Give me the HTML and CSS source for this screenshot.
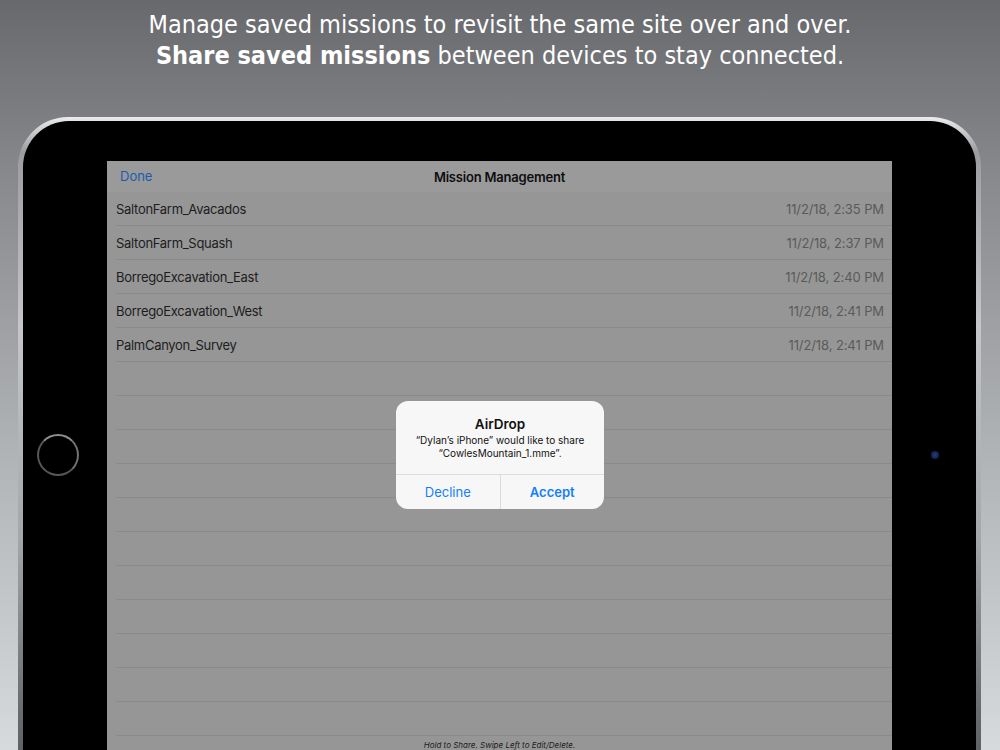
FILE: index.html
```html
<!DOCTYPE html>
<html>
<head>
<meta charset="utf-8">
<link rel="stylesheet" href="styles.css">
</head>
<body>
<div class="caption">
  <div>Manage saved missions to revisit the same site over and over.</div>
  <div><b>Share saved missions</b> between devices to stay connected.</div>
</div>
<div class="ipad">
  <div class="bezel">
    <div class="side left"><div class="home"></div></div>
    <div class="screen">
      <div class="nav">
        <span class="done">Done</span>
        <span class="title">Mission Management</span>
      </div>
      <div class="list">
        <div class="row"><span>SaltonFarm_Avacados</span><span class="date">11/2/18, 2:35 PM</span></div>
        <div class="row"><span>SaltonFarm_Squash</span><span class="date">11/2/18, 2:37 PM</span></div>
        <div class="row"><span>BorregoExcavation_East</span><span class="date">11/2/18, 2:40 PM</span></div>
        <div class="row"><span>BorregoExcavation_West</span><span class="date">11/2/18, 2:41 PM</span></div>
        <div class="row"><span>PalmCanyon_Survey</span><span class="date">11/2/18, 2:41 PM</span></div>
        <div class="row"></div><div class="row"></div><div class="row"></div><div class="row"></div>
        <div class="row"></div><div class="row"></div><div class="row"></div><div class="row"></div>
        <div class="row"></div><div class="row"></div><div class="row"></div>
      </div>
      <div class="hint">Hold to Share. Swipe Left to Edit/Delete.</div>
      <div class="alert">
        <div class="alert-body">
          <div class="alert-title">AirDrop</div>
          <div class="alert-msg">“Dylan’s iPhone” would like to share<br>“CowlesMountain_1.mme”.</div>
        </div>
        <div class="alert-actions">
          <div class="btn">Decline</div>
          <div class="btn strong">Accept</div>
        </div>
      </div>
    </div>
    <div class="side right"><div class="camera"></div></div>
  </div>
</div>
</body>
</html>
```
FILE: styles.css
```css
html, body {
  margin: 0;
  padding: 0;
}
body {
  width: 1000px;
  height: 750px;
  overflow: hidden;
  background: linear-gradient(to bottom, #68696d 0%, #8a8b8f 25%, #b0b3b6 60%, #d6dadd 100%);
  font-family: Inter, "Liberation Sans", sans-serif;
}
.caption {
  color: #fff;
  text-align: center;
  font-family: "DejaVu Sans Condensed", "DejaVu Sans", sans-serif;
  font-size: 25px;
  line-height: 31px;
  padding-top: 9px;
  height: 107px;
  box-sizing: border-box;
}
.caption b { font-weight: bold; }
.ipad {
  margin: 10px 19px 0 18px;
  height: 700px;
  padding: 4px 5px 0 5px;
  border-radius: 50px 50px 0 0;
  background: linear-gradient(to bottom, #ececee 0%, #9c9da1 5%, #c4c6c8 30%, #a4a6a9 60%, #6a6b6f 85%, #505155 100%);
  box-sizing: border-box;
}
.bezel {
  background: #000;
  height: 100%;
  border-radius: 46px 46px 0 0;
  display: flex;
  padding-top: 40px;
  box-sizing: border-box;
}
.side {
  width: 84px;
  flex: none;
  display: flex;
  justify-content: center;
}
.side.right { width: 83px; }
.home {
  margin-top: 273px;
  width: 38px;
  height: 38px;
  border-radius: 50%;
  border: 2px solid #55565a;
  border-top-color: #8e8f93;
  border-right-color: #707175;
  margin-left: -14px;
}
.camera {
  margin-top: 290px;
  width: 8px;
  height: 8px;
  border-radius: 50%;
  background: radial-gradient(circle, #1e3f90 0%, #17234a 60%, #2a2b30 100%);
  margin-left: 2px;
}
.screen {
  width: 785px;
  flex: none;
  background: #969696;
  position: relative;
  display: flex;
  flex-direction: column;
}
.nav {
  height: 31px;
  background: #9a9a9a;
  position: relative;
  display: flex;
  align-items: center;
  justify-content: center;
  font-size: 13px;
}
.done {
  position: absolute;
  left: 13px;
  top: 7px;
  color: #1b5cae;
  font-size: 13px;
}
.title {
  font-weight: 600;
  color: #0e0e0e;
  letter-spacing: -0.2px;
}
.list {
  padding-left: 9px;
}
.row {
  height: 34px;
  box-sizing: border-box;
  border-bottom: 1px solid #8a8a8a;
  display: flex;
  align-items: center;
  justify-content: space-between;
  padding-right: 8px;
  padding-top: 1px;
  font-size: 13px;
  letter-spacing: -0.3px;
  color: #1d1d1d;
}
.date { color: #5a5a5a; letter-spacing: -0.1px; }
.hint {
  text-align: center;
  font-size: 8px;
  font-style: italic;
  color: #1d1d1d;
  padding-top: 4px;
}
.alert {
  position: absolute;
  left: 289px;
  top: 240px;
  width: 208px;
  border-radius: 12px;
  background: #f7f7f7;
  overflow: hidden;
}
.alert-body {
  padding: 15px 12px 14px;
  text-align: center;
  color: #111;
}
.alert-title {
  font-size: 13.5px;
  font-weight: 600;
  line-height: 16px;
}
.alert-msg {
  font-size: 10px;
  line-height: 13px;
  margin-top: 2px;
}
.alert-actions {
  display: flex;
  border-top: 1px solid #dcdcdc;
  height: 34px;
}
.btn {
  flex: 1;
  display: flex;
  align-items: center;
  justify-content: center;
  color: #147efb;
  font-size: 13px;
}
.btn + .btn { border-left: 1px solid #dcdcdc; }
.btn.strong { font-weight: 600; }
```
